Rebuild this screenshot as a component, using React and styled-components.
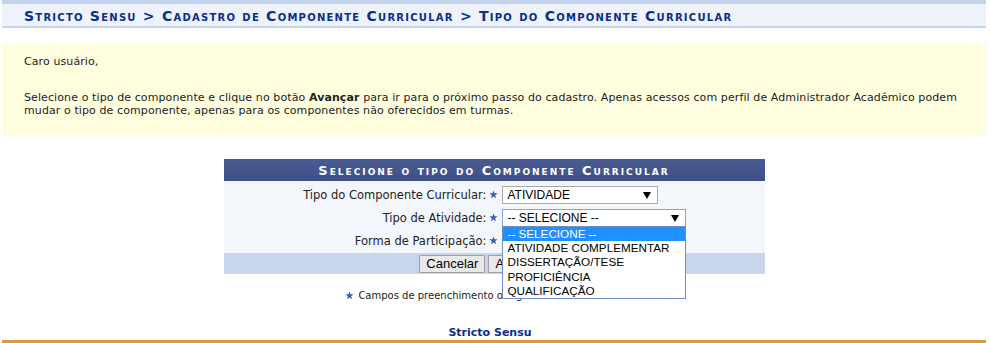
import React from "react";
import styled, { createGlobalStyle } from "styled-components";

const Global = createGlobalStyle`
  html, body { margin: 0; padding: 0; background: #fff; }
  body { font-family: "DejaVu Sans", Verdana, sans-serif; font-size: 11px; color: #222; }
`;

const Page = styled.div`
  width: 984px;
  margin-left: 2px;
  display: flex;
  flex-direction: column;
`;

const Breadcrumb = styled.div`
  border-top: 4px solid #c4d2eb;
  border-bottom: 2px solid #c4d2eb;
  background: #eef2fa;
  height: 22px;
  display: flex;
  align-items: center;
  padding-left: 22px;
`;

const Title = styled.h2`
  margin: 1px 0 0;
  font-size: 14px;
  font-weight: bold;
  font-variant: small-caps;
  letter-spacing: 1.25px;
  color: #0a2d8c;
  white-space: nowrap;
`;

const Notice = styled.div`
  margin-top: 15px;
  background: #ffffe0;
  height: 92px;
  box-sizing: border-box;
  padding: 12px 22px 0 22px;
  line-height: 13.5px;
  letter-spacing: 0.1px;
  p { margin: 0; }
  p + p { margin-top: 22px; }
`;

const FormTable = styled.div`
  margin: 24px auto 0;
  width: 541px;
  display: flex;
  flex-direction: column;
`;

const Caption = styled.div`
  height: 22px;
  background: linear-gradient(#4b5c92, #3f5088);
  color: #fff;
  font-weight: bold;
  font-size: 13px;
  font-variant: small-caps;
  letter-spacing: 2px;
  display: flex;
  align-items: center;
  justify-content: center;
  white-space: nowrap;
`;

const Body = styled.div`
  background: #f3f6fb;
  padding: 2px 0 1px;
  display: grid;
  grid-template-columns: 263px 1fr;
  grid-auto-rows: 23px;
`;

const Label = styled.div`
  display: flex;
  align-items: center;
  justify-content: flex-end;
  font-size: 11.5px;
  color: #222;
`;

const Field = styled.div`
  display: flex;
  align-items: center;
  gap: 4px;
`;

const Star = styled.svg`
  width: 9px;
  height: 9px;
  flex: none;
  margin-left: 2px;
`;

const RequiredStar = () => (
  <Star viewBox="0 0 10 10">
    <polygon
      points="5,0.5 6.2,3.6 9.5,3.7 6.9,5.8 7.8,9.2 5,7.3 2.2,9.2 3.1,5.8 0.5,3.7 3.8,3.6"
      fill="#3a5fb8"
    />
  </Star>
);

const SelectWrap = styled.div`
  position: relative;
`;

const Select = styled.div`
  position: relative;
  box-sizing: border-box;
  width: ${(p) => p.$w}px;
  height: 18px;
  background: #fff;
  border: 1px solid ${(p) => (p.$focus ? "#7ba7e1" : "#a9a9a9")};
  font-family: "Liberation Sans", Arial, sans-serif;
  font-size: 12px;
  color: #000;
  display: flex;
  align-items: center;
  padding-left: 5px;
  white-space: nowrap;
  &::after {
    content: "";
    position: absolute;
    right: 6px;
    top: 5px;
    border-left: 4px solid transparent;
    border-right: 4px solid transparent;
    border-top: 7px solid #000;
  }
`;

const List = styled.ul`
  position: absolute;
  left: 0;
  top: 17px;
  width: 184px;
  box-sizing: border-box;
  margin: 0;
  padding: 0;
  list-style: none;
  background: #fff;
  border: 1px solid #6f8fc4;
  font-family: "Liberation Sans", Arial, sans-serif;
  font-size: 11.7px;
  z-index: 5;
`;

const Option = styled.li`
  height: 14.4px;
  line-height: 14.4px;
  padding-left: 5px;
  white-space: nowrap;
  background: ${(p) => (p.$active ? "#1e90ff" : "transparent")};
  color: ${(p) => (p.$active ? "#fff" : "#000")};
`;

const Footer = styled.div`
  height: 21px;
  background: #c8d5ec;
  display: flex;
  align-items: center;
  justify-content: center;
  gap: 3px;
`;

const Button = styled.button`
  height: 18px;
  padding: 0 6px;
  font-family: "Liberation Sans", Arial, sans-serif;
  font-size: 13px;
  color: #000;
  background: #e9e9e9;
  border: 1px solid #a0a0a0;
  border-radius: 1px;
`;

const Required = styled.div`
  margin-top: 16px;
  display: flex;
  align-items: center;
  justify-content: center;
  gap: 4px;
  font-size: 10px;
  color: #222;
  padding-right: 90px;
`;

const FooterTitle = styled.div`
  margin-top: 26px;
  line-height: 12px;
  text-align: center;
  font-weight: bold;
  font-size: 11px;
  color: #0a2d8c;
  padding-right: 8px;
`;

const Bar = styled.div`
  margin-top: 1px;
  height: 4px;
  background: #d99a3f;
`;

const options = [
  "-- SELECIONE --",
  "ATIVIDADE COMPLEMENTAR",
  "DISSERTAÇÃO/TESE",
  "PROFICIÊNCIA",
  "QUALIFICAÇÃO",
];

export default function App() {
  return (
    <>
      <Global />
      <Page>
        <Breadcrumb>
          <Title>Stricto Sensu &gt; Cadastro de Componente Curricular &gt; Tipo do Componente Curricular</Title>
        </Breadcrumb>
        <Notice>
          <p>Caro usuário,</p>
          <p>
            Selecione o tipo de componente e clique no botão <b>Avançar</b> para ir para o próximo passo do cadastro.
            Apenas acessos com perfil de Administrador Acadêmico podem mudar o tipo de componente, apenas para os
            componentes não oferecidos em turmas.
          </p>
        </Notice>
        <FormTable>
          <Caption>Selecione o tipo do Componente Curricular</Caption>
          <Body>
            <Label>Tipo do Componente Curricular:</Label>
            <Field>
              <RequiredStar />
              <Select $w={156}>ATIVIDADE</Select>
            </Field>
            <Label>Tipo de Atividade:</Label>
            <Field>
              <RequiredStar />
              <SelectWrap>
                <Select $w={184} $focus>-- SELECIONE --</Select>
                <List>
                  {options.map((o, i) => (
                    <Option key={o} $active={i === 0}>
                      {o}
                    </Option>
                  ))}
                </List>
              </SelectWrap>
            </Field>
            <Label>Forma de Participação:</Label>
            <Field>
              <RequiredStar />
            </Field>
          </Body>
          <Footer>
            <Button>Cancelar</Button>
            <Button>Avançar &gt;&gt;</Button>
          </Footer>
        </FormTable>
        <Required>
          <RequiredStar />
          <span>Campos de preenchimento obrigatório.</span>
        </Required>
        <FooterTitle>Stricto Sensu</FooterTitle>
        <Bar />
      </Page>
    </>
  );
}
